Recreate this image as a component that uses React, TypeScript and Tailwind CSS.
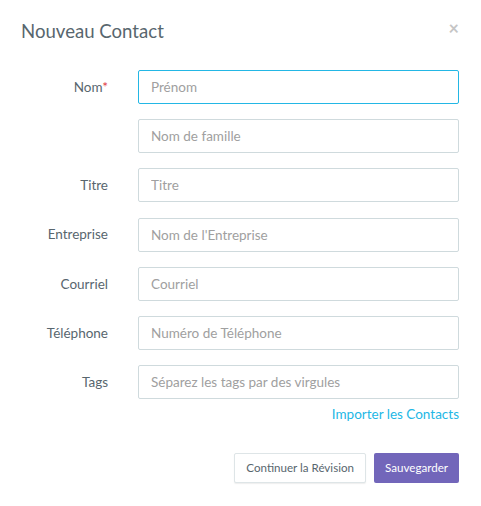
import React from "react";

const rows: { label: string; placeholder: string; required?: boolean; focus?: boolean }[] = [
  { label: "Nom", placeholder: "Prénom", required: true, focus: true },
  { label: "", placeholder: "Nom de famille" },
  { label: "Titre", placeholder: "Titre" },
  { label: "Entreprise", placeholder: "Nom de l'Entreprise" },
  { label: "Courriel", placeholder: "Courriel" },
  { label: "Téléphone", placeholder: "Numéro de Téléphone" },
  { label: "Tags", placeholder: "Séparez les tags par des virgules" },
];

export default function App() {
  return (
    <div
      className="w-[481px] h-[506px] bg-white text-[#58666e]"
      style={{ fontFamily: "Lato, 'Open Sans', sans-serif" }}
    >
      <div className="flex items-start justify-between pl-[21px] pr-[22px] pt-[18px] h-[70px]">
        <h1 className="text-[18.6px] leading-[26px] text-[#58666e]">Nouveau Contact</h1>
        <span className="text-[18px] leading-[18px] text-[#c5c5c5] font-bold mt-[1px]">×</span>
      </div>
      <div className="px-[21px] pr-[22px] flex flex-col gap-[15.2px]">
        {rows.map((r, i) => (
          <div key={i} className="flex items-center h-[34px]">
            <div className="w-[87px] text-right text-[13.5px] pr-0">
              {r.label}
              {r.required && <span className="text-[#e0393e]">*</span>}
            </div>
            <div className="ml-[30px] flex-1">
              <input
                readOnly
                placeholder={r.placeholder}
                className={`w-full h-[34px] px-[12px] text-[13.5px] rounded-[2px] border outline-none placeholder:text-[#a0a0a0] ${
                  r.focus ? "border-[#23b7e5]" : "border-[#cfdadd]"
                }`}
                style={{ fontFamily: "Lato, 'Open Sans', sans-serif" }}
              />
            </div>
          </div>
        ))}
      </div>
      <div className="pr-[22px] flex justify-end mt-[5px]">
        <a className="text-[13.5px] text-[#23b7e5] leading-[20px]">Importer les Contacts</a>
      </div>
      <div className="pr-[22px] flex justify-end gap-[8px] mt-[29px]">
        <button className="h-[30px] px-[11px] text-[11.6px] border border-[#dee5e7] rounded-[2px] bg-white text-[#58666e] shadow-[0_1px_1px_rgba(90,90,90,0.1)]">
          Continuer la Révision
        </button>
        <button className="h-[30px] px-[11px] text-[11.6px] rounded-[2px] bg-[#7266ba] text-white">
          Sauvegarder
        </button>
      </div>
    </div>
  );
}
